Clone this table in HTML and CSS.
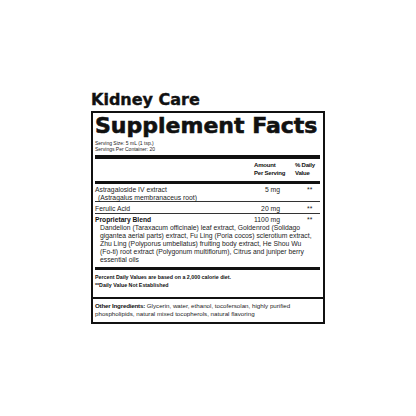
FILE: index.html
```html
<!DOCTYPE html>
<html lang="en">
<head>
<meta charset="utf-8">
<title>Kidney Care – Supplement Facts</title>
<link rel="stylesheet" href="styles.css">
</head>
<body>
<div class="page">
  <h1 class="brand">Kidney Care</h1>
  <div class="label">
    <div class="facts">
      <h2 class="title">Supplement Facts</h2>
      <div class="serving">Serving Size: 5 mL (1 tsp.)<br>Servings Per Container: 20</div>
      <div class="bar bar-thick"></div>
      <div class="row head">
        <span class="name"></span>
        <span class="amt">Amount<br>Per Serving</span>
        <span class="dv">% Daily<br>Value</span>
      </div>
      <div class="bar bar-mid"></div>
      <div class="row r-first">
        <span class="name">Astragaloside IV extract<span class="sub">(Astragalus membranaceus root)</span></span>
        <span class="amt">5 mg</span>
        <span class="dv">**</span>
      </div>
      <div class="row r-mid">
        <span class="name">Ferulic Acid</span>
        <span class="amt">20 mg</span>
        <span class="dv">**</span>
      </div>
      <div class="row r-blend">
        <span class="name"><b class="blend-name">Proprietary Blend</b></span>
        <span class="amt">1100 mg</span>
        <span class="dv">**</span>
      </div>
      <p class="blend">Dandelion (Taraxacum officinale) leaf extract, Goldenrod (Solidago<br>gigantea aerial parts) extract, Fu Ling (Poria cocos) sclerotium extract,<br>Zhu Ling (Polyporus umbellatus) fruiting body extract, He Shou Wu<br>(Fo-ti) root extract (Polygonum multiflorum), Citrus and juniper berry<br>essential oils</p>
      <div class="bar bar-low"></div>
      <p class="notes">Percent Daily Values are based on a 2,000 calorie diet.<br>**Daily Value Not Established</p>
    </div>
    <p class="other"><b>Other Ingredients:</b> Glycerin, water, ethanol, tocofersolan, highly purified<br>phospholipids, natural mixed tocopherols, natural flavoring</p>
  </div>
</div>
</body>
</html>
```

FILE: styles.css
```css
html, body {
  margin: 0;
  background: #ffffff;
}

.page {
  width: 234px;
  margin: 0 auto;
  padding-top: 91px;
  color: #1c1c1c;
  font-family: "Liberation Sans", Arial, sans-serif;
}

.brand {
  margin: 0;
  font: bold 16px/18px "DejaVu Sans", sans-serif;
  color: #111;
  -webkit-text-stroke: 0.4px #111;
}

.label {
  margin-top: 2px;
  border: 2px solid #111;
}

.facts {
  padding: 0 3px 0 2px;
}

.title {
  margin: 0;
  padding-top: 3px;
  font: bold 22px/20px "DejaVu Sans", sans-serif;
  color: #111;
  -webkit-text-stroke: 0.6px #111;
  white-space: nowrap;
}

.serving {
  margin-top: 3.5px;
  font-size: 5px;
  line-height: 6.5px;
}

.bar {
  background: #111;
}

.bar-thick {
  height: 4px;
  margin-top: 2.5px;
}

.bar-mid {
  height: 3px;
  margin-top: 4px;
}

.bar-low {
  height: 3px;
  margin-top: 3px;
}

.row {
  display: grid;
  grid-template-columns: 1fr 41px 25px;
  font-size: 6.8px;
  line-height: 7.5px;
}

.row .amt {
  text-align: right;
  padding-right: 15px;
  white-space: nowrap;
}

.row .dv {
  padding-left: 12px;
}

.head {
  padding-top: 3px;
  font-size: 6px;
  font-weight: bold;
  letter-spacing: -0.2px;
  color: #111;
}

.head .amt {
  text-align: left;
  padding-right: 0;
}

.head .dv {
  padding-left: 0;
  white-space: nowrap;
}

.sub {
  display: block;
  padding-left: 3px;
}

.r-first {
  padding-top: 2px;
  border-bottom: 1px solid #333;
}

.r-mid {
  padding-top: 2.5px;
  padding-bottom: 1px;
  border-bottom: 1px solid #333;
}

.r-blend {
  padding-top: 2px;
  line-height: 8px;
}

.blend-name {
  font-size: 6.7px;
  color: #111;
}

.blend {
  margin: 0;
  padding-left: 5px;
  font-size: 6.8px;
  line-height: 8px;
  white-space: nowrap;
}

.notes {
  margin: 0;
  padding: 2.5px 0 8.5px;
  font-size: 5.3px;
  line-height: 8px;
  font-weight: bold;
  color: #111;
}

.other {
  margin: 0;
  border-top: 2px solid #111;
  padding: 2.5px 2px 4.5px;
  font-size: 6.2px;
  line-height: 8px;
  white-space: nowrap;
}

.other b {
  color: #111;
  letter-spacing: -0.2px;
}
```
